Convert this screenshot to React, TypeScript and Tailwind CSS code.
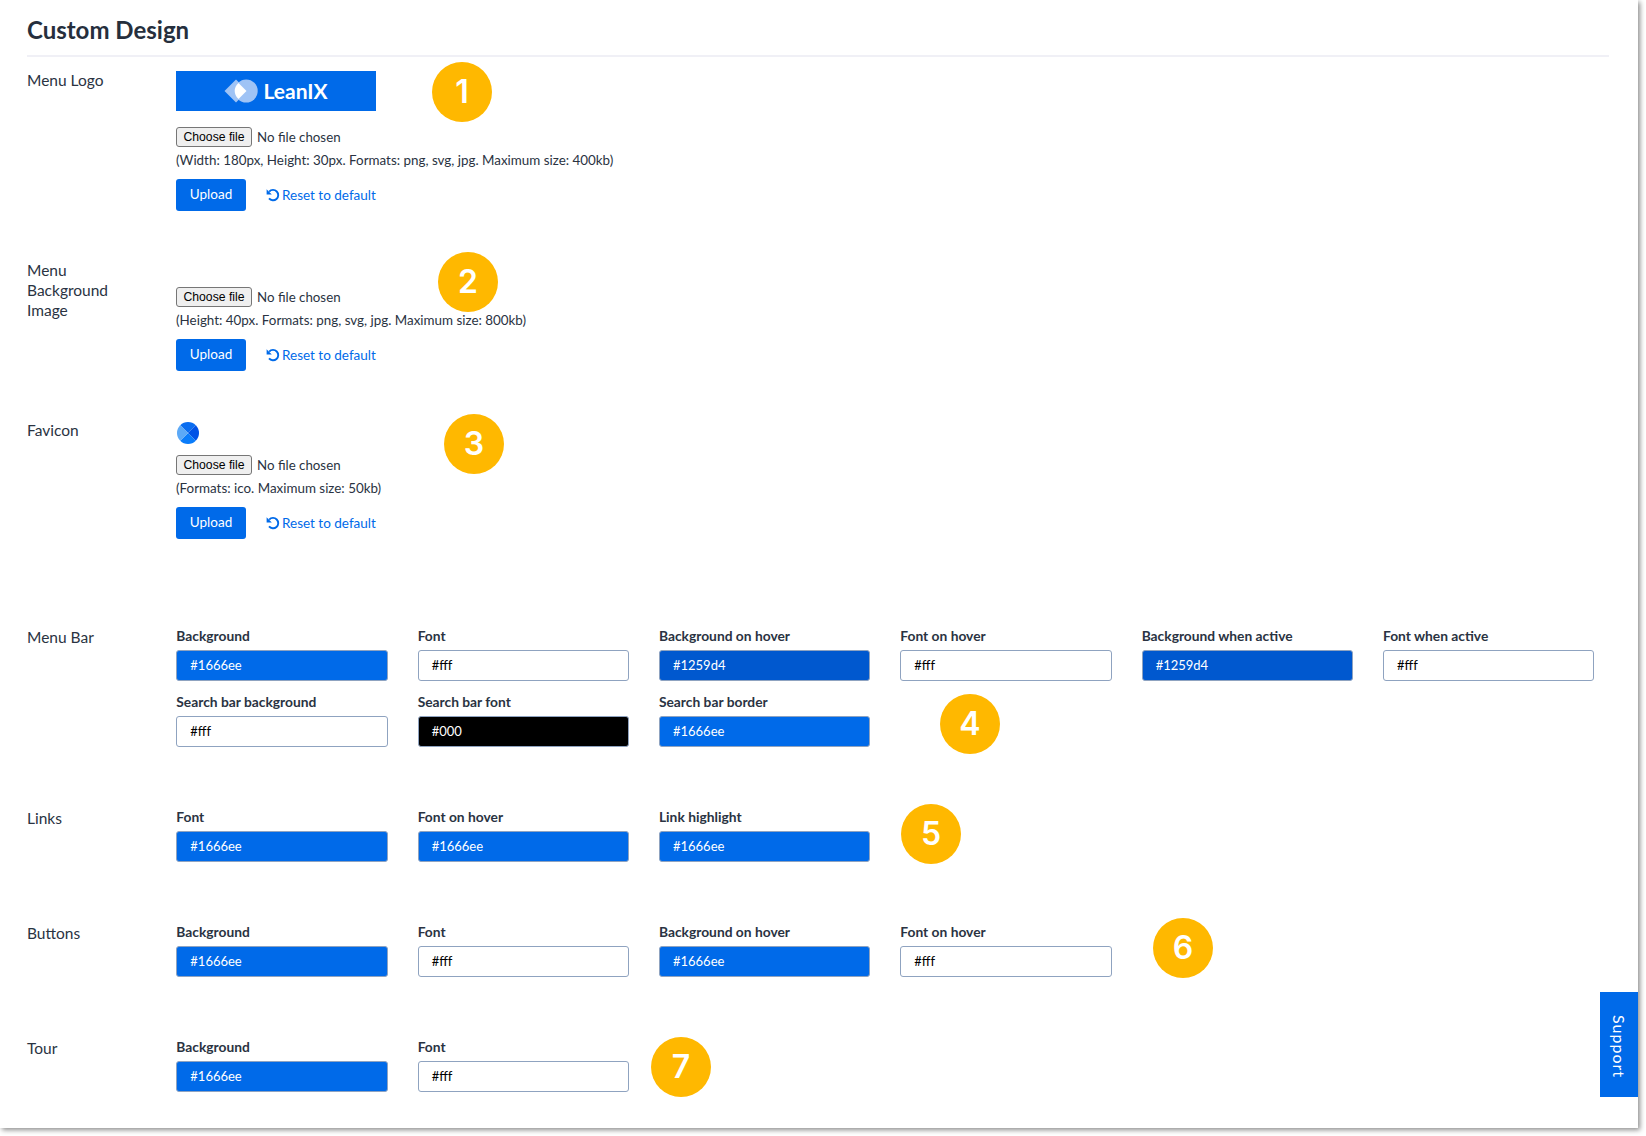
function FileRow() {
  return (
    <div className="flex items-center h-5">
      <button className="h-5 w-[76px] rounded-[3px] border border-[#767676] bg-[#efefef] text-[12.2px] leading-none text-black font-['Liberation_Sans',sans-serif]">
        Choose file
      </button>
      <span className="ml-[5px] text-[13.3px] leading-[19px] text-[#2a3342]">No file chosen</span>
    </div>
  );
}

function UndoIcon() {
  return (
    <svg width="14" height="14" viewBox="0 0 14 14" className="mr-[2px] shrink-0" fill="none">
      <path d="M3.2 3.6 A5.2 5.2 0 1 1 3 10.4" stroke="#006ae9" strokeWidth="1.9" />
      <path d="M0.6 1.2 L0.6 6.4 L5.8 6.4 Z" fill="#006ae9" />
    </svg>
  );
}

function UploadRow() {
  return (
    <div className="mt-[9px] flex items-center">
      <button className="h-8 w-[70px] rounded-[3px] bg-[#006ae9] pb-[2px] text-[13.5px] text-white">Upload</button>
      <a className="ml-5 flex items-center text-[13.5px] leading-[19px] text-[#006ae9]">
        <UndoIcon />
        Reset to default
      </a>
    </div>
  );
}

function UploadSection({ label, hint, top, children, className }: { label: string; hint: string; top: string; children?: React.ReactNode; className: string }) {
  return (
    <section className={"flex " + className}>
      <div className="-mt-px w-[149px] pr-[45px] text-[15.5px] leading-5 text-[#2a3342]">{label}</div>
      <div className={top}>
        {children}
        <FileRow />
        <p className="mt-[3px] text-[13.4px] leading-5 text-[#2a3342]">{hint}</p>
        <UploadRow />
      </div>
    </section>
  );
}

type F = [string, string, "blue" | "dark" | "white" | "black"];

function Field({ f }: { f: F }) {
  const [label, value, kind] = f;
  const cls =
    kind === "blue"
      ? "bg-[#006ae9] text-white"
      : kind === "dark"
        ? "bg-[#0058cf] text-white"
        : kind === "black"
          ? "bg-black text-white"
          : "bg-white text-black";
  return (
    <div>
      <div className="h-5 text-[13.8px] font-bold leading-5 text-[#2a3342] whitespace-nowrap">{label}</div>
      <div className={"mt-1 flex h-[31px] items-center rounded-[3px] border border-[#8fa3c0] pl-[13px] text-[13px] " + cls}>{value}</div>
    </div>
  );
}

function ColorSection({ label, fields, className }: { label: string; fields: F[]; className: string }) {
  return (
    <section className={"flex " + className}>
      <div className="w-[149.3px] shrink-0 pt-[1px] text-[15.5px] leading-5 text-[#2a3342]">{label}</div>
      <div className="grid w-[1418px] grid-cols-6 gap-x-[30px] gap-y-[11px]">
        {fields.map((f) => (
          <Field key={f[0]} f={f} />
        ))}
      </div>
    </section>
  );
}

function Badge({ n, className }: { n: number; className: string }) {
  return (
    <div className={"absolute flex h-[60px] w-[60px] items-center justify-center rounded-full bg-[#ffb800] text-[32px] font-semibold font-['Inter',sans-serif] text-white " + className}>
      {n}
    </div>
  );
}

export default function App() {
  return (
    <div className="h-[1136px] w-[1646px] overflow-hidden bg-white font-['Lato',sans-serif]">
      <div className="relative h-[1128px] w-[1638px] bg-white px-[27px] shadow-[2px_2px_5px_rgba(0,0,0,0.45)]">
        <header className="flex h-[57px] w-[1582px] items-center border-b-2 border-[#f0f0f6] pt-[5px]">
          <h1 className="text-[24px] font-bold text-[#262f3d]">Custom Design</h1>
        </header>

        <section className="mt-[14px] flex">
          <div className="-mt-px w-[149px] text-[15.5px] leading-5 text-[#2a3342]">Menu Logo</div>
          <div>
            <div className="flex h-10 w-[200px] items-center justify-center gap-[5px] bg-[#006ae9]">
              <svg width="34" height="24" viewBox="0 0 34 24">
                <path d="M12 0.5 L23.5 12 L12 23.5 L0.5 12 Z" fill="#9fc3f5" />
                <circle cx="22.2" cy="12" r="11.5" fill="#9fc3f5" />
                <path d="M14.5 4 L22.5 12 L14.5 20 Q10.7 16.5 10.7 12 Q10.7 7.5 14.5 4 Z" fill="#ffffff" />
              </svg>
              <span className="pb-[2px] text-[21px] font-bold leading-none text-white">LeanIX</span>
            </div>
            <div className="mt-4">
              <FileRow />
            </div>
            <p className="mt-[3px] text-[13.4px] leading-5 text-[#2a3342]">(Width: 180px, Height: 30px. Formats: png, svg, jpg. Maximum size: 400kb)</p>
            <UploadRow />
          </div>
        </section>

        <UploadSection className="mt-[50px]" top="pt-[26px]" label="Menu Background Image" hint="(Height: 40px. Formats: png, svg, jpg. Maximum size: 800kb)" />

        <UploadSection className="mt-[50px]" top="pt-[1px]" label="Favicon" hint="(Formats: ico. Maximum size: 50kb)">
          <svg width="22" height="22" viewBox="0 0 22 22" className="mb-[11px] ml-[1px] block">
            <defs>
              <clipPath id="fav">
                <circle cx="11" cy="11" r="11" />
              </clipPath>
            </defs>
            <g clipPath="url(#fav)">
              <path d="M0 0H22L11 11Z" fill="#0a6df0" />
              <path d="M22 0V22L11 11Z" fill="#0052e6" />
              <path d="M22 22H0L11 11Z" fill="#0a7cfa" />
              <path d="M0 22V0L11 11Z" fill="#5ca9f7" />
            </g>
          </svg>
        </UploadSection>

        <ColorSection
          className="mt-[87px]"
          label="Menu Bar"
          fields={[
            ["Background", "#1666ee", "blue"],
            ["Font", "#fff", "white"],
            ["Background on hover", "#1259d4", "dark"],
            ["Font on hover", "#fff", "white"],
            ["Background when active", "#1259d4", "dark"],
            ["Font when active", "#fff", "white"],
            ["Search bar background", "#fff", "white"],
            ["Search bar font", "#000", "black"],
            ["Search bar border", "#1666ee", "blue"],
          ]}
        />
        <ColorSection
          className="mt-[60px]"
          label="Links"
          fields={[
            ["Font", "#1666ee", "blue"],
            ["Font on hover", "#1666ee", "blue"],
            ["Link highlight", "#1666ee", "blue"],
          ]}
        />
        <ColorSection
          className="mt-[60px]"
          label="Buttons"
          fields={[
            ["Background", "#1666ee", "blue"],
            ["Font", "#fff", "white"],
            ["Background on hover", "#1666ee", "blue"],
            ["Font on hover", "#fff", "white"],
          ]}
        />
        <ColorSection
          className="mt-[60px]"
          label="Tour"
          fields={[
            ["Background", "#1666ee", "blue"],
            ["Font", "#fff", "white"],
          ]}
        />

        <Badge n={1} className="left-[432px] top-[62px]" />
        <Badge n={2} className="left-[438px] top-[252px]" />
        <Badge n={3} className="left-[444px] top-[414px]" />
        <Badge n={4} className="left-[940px] top-[694px]" />
        <Badge n={5} className="left-[901px] top-[804px]" />
        <Badge n={6} className="left-[1153px] top-[918px]" />
        <Badge n={7} className="left-[651px] top-[1037px]" />

        <div className="absolute right-0 top-[992px] flex h-[105px] w-[38px] items-center justify-center bg-[#006ae9] pt-[5px] text-[16px] tracking-[1px] text-white [writing-mode:vertical-rl]">
          Support
        </div>
      </div>
    </div>
  );
}
